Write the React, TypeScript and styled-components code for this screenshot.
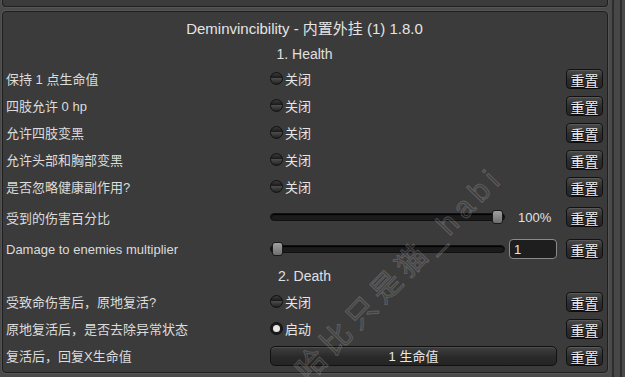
import styled, { createGlobalStyle, css } from "styled-components";

const GlobalStyle = createGlobalStyle`
  html, body {
    margin: 0;
    padding: 0;
    background: #4a4a4a;
    overflow: hidden;
  }
  body {
    font-family: "Liberation Sans", "Noto Sans CJK SC", sans-serif;
    color: #dcdcdc;
  }
`;

const Screen = styled.div`
  position: relative;
  display: flex;
  width: 625px;
  height: 377px;
  overflow: hidden;
`;

const Main = styled.div`
  flex: 1;
  display: flex;
  flex-direction: column;
  gap: 4px;
  padding: 0 0 0 2px;
`;

const PanelBase = css`
  background: #3b3b3b;
  border: 1px solid #1f1f1f;
  box-shadow: 0 0 0 1px #555;
  border-radius: 4px;
`;

const PrevPanel = styled.div`
  ${PanelBase};
  height: 6px;
  border-top: none;
  border-radius: 0 0 4px 4px;
`;

const Panel = styled.div`
  ${PanelBase};
  display: flex;
  flex-direction: column;
  height: 360px;
  padding: 0 4px 0 3px;
`;

const Title = styled.div`
  height: 30px;
  display: flex;
  align-items: center;
  justify-content: center;
  font-size: 15px;
  color: #e4e4e4;
`;

const Section = styled.div<{ $h: number }>`
  height: ${(p) => p.$h}px;
  display: flex;
  align-items: center;
  justify-content: center;
  font-size: 14px;
  color: #e0e0e0;
`;

const Row = styled.div<{ $h?: number }>`
  height: ${(p) => p.$h ?? 27}px;
  display: grid;
  grid-template-columns: 255px 287px 37px;
  column-gap: 9px;
  align-items: center;
  font-size: 13px;
`;

const Label = styled.div`
  color: #dcdcdc;
  white-space: nowrap;
`;

const Control = styled.div`
  display: flex;
  align-items: center;
  gap: 4px;
  min-width: 0;
`;

const Toggle = styled.span<{ $on?: boolean }>`
  position: relative;
  width: 11px;
  height: 11px;
  border-radius: 50%;
  border: 1px solid #111;
  background: linear-gradient(#3a3a3a 0%, #1a1a1a 45%, #4a4a4a 50%, #222 100%);
  flex-shrink: 0;
  ${(p) =>
    p.$on &&
    css`
      background: #1c1c1c;
      &::after {
        content: "";
        position: absolute;
        left: 2px;
        top: 2px;
        width: 7px;
        height: 7px;
        border-radius: 50%;
        background: #e8e8e8;
      }
    `}
`;

const ToggleText = styled.span`
  color: #e6e6e6;
  margin-left: -2px;
`;

const ResetButton = styled.button`
  width: 37px;
  height: 20px;
  padding: 0;
  border: 1px solid #111;
  border-radius: 4px;
  background: linear-gradient(#4a4a4a, #2c2c2c 55%, #262626);
  box-shadow: inset 0 1px 0 #5a5a5a;
  color: #ececec;
  font-family: inherit;
  font-size: 14px;
  text-shadow: 0 1px 1px #000;
`;

const Track = styled.div<{ $w: number }>`
  position: relative;
  width: ${(p) => p.$w}px;
  height: 6px;
  border-radius: 4px;
  background: #1b1b1b;
  border: 1px solid #111;
  box-shadow: inset 0 1px 1px #000;
  flex-shrink: 0;
`;

const Thumb = styled.span`
  position: absolute;
  top: -4px;
  width: 9px;
  height: 12px;
  border-radius: 3px;
  border: 1px solid #1a1a1a;
  background: linear-gradient(#a0a0a0, #6e6e6e);
`;

const Value = styled.span`
  margin-left: 9px;
  color: #e0e0e0;
`;

const NumberBox = styled.div`
  width: 44px;
  height: 18px;
  border: 1px solid #8a8a8a;
  border-radius: 4px;
  background: #1e1e1e;
  color: #e6e6e6;
  padding-left: 4px;
  display: flex;
  align-items: center;
`;

const WideButton = styled.div`
  flex: 1;
  height: 18px;
  border: 1px solid #111;
  border-radius: 5px;
  background: linear-gradient(#3f3f3f, #2a2a2a 55%, #242424);
  box-shadow: inset 0 1px 0 #4f4f4f;
  display: flex;
  align-items: center;
  justify-content: center;
  color: #e8e8e8;
`;

const ScrollArea = styled.div`
  width: 17px;
  display: flex;
  padding-left: 4px;
`;

const ScrollTrack = styled.div`
  width: 6px;
  border-left: 2px solid #2d2d2d;
  border-right: 2px solid #2d2d2d;
  background: #474747;
`;

const Watermark = styled.div`
  position: absolute;
  left: 312px;
  top: 356px;
  font-size: 30px;
  line-height: 30px;
  letter-spacing: 6px;
  color: rgba(255, 255, 255, 0.03);
  -webkit-text-stroke: 1px rgba(170, 170, 170, 0.32);
  transform: rotate(-46deg);
  transform-origin: 0 100%;
  white-space: nowrap;
  pointer-events: none;
`;

const toggles = [
  "保持 1 点生命值",
  "四肢允许 0 hp",
  "允许四肢变黑",
  "允许头部和胸部变黑",
  "是否忽略健康副作用?",
];

const ToggleControl = ({ on }: { on?: boolean }) => (
  <Control>
    <Toggle $on={on} />
    <ToggleText>{on ? "启动" : "关闭"}</ToggleText>
  </Control>
);

export default function App() {
  return (
    <>
      <GlobalStyle />
      <Screen>
        <Main>
          <PrevPanel />
          <Panel>
            <Title>Deminvincibility - 内置外挂 (1) 1.8.0</Title>
            <Section $h={23}>1. Health</Section>
            {toggles.map((t) => (
              <Row key={t}>
                <Label>{t}</Label>
                <ToggleControl />
                <ResetButton>重置</ResetButton>
              </Row>
            ))}
            <Row $h={34}>
              <Label>受到的伤害百分比</Label>
              <Control>
                <Track $w={233}>
                  <Thumb style={{ left: 221 }} />
                </Track>
                <Value>100%</Value>
              </Control>
              <ResetButton>重置</ResetButton>
            </Row>
            <Row $h={30}>
              <Label>Damage to enemies multiplier</Label>
              <Control>
                <Track $w={233}>
                  <Thumb style={{ left: 1 }} />
                </Track>
                <NumberBox>1</NumberBox>
              </Control>
              <ResetButton>重置</ResetButton>
            </Row>
            <Section $h={24}>2. Death</Section>
            <Row>
              <Label>受致命伤害后，原地复活?</Label>
              <ToggleControl />
              <ResetButton>重置</ResetButton>
            </Row>
            <Row>
              <Label>原地复活后，是否去除异常状态</Label>
              <ToggleControl on />
              <ResetButton>重置</ResetButton>
            </Row>
            <Row>
              <Label>复活后，回复X生命值</Label>
              <Control>
                <WideButton>1 生命值</WideButton>
              </Control>
              <ResetButton>重置</ResetButton>
            </Row>
          </Panel>
        </Main>
        <ScrollArea>
          <ScrollTrack />
        </ScrollArea>
        <Watermark>哈比只是猫_habi</Watermark>
      </Screen>
    </>
  );
}
